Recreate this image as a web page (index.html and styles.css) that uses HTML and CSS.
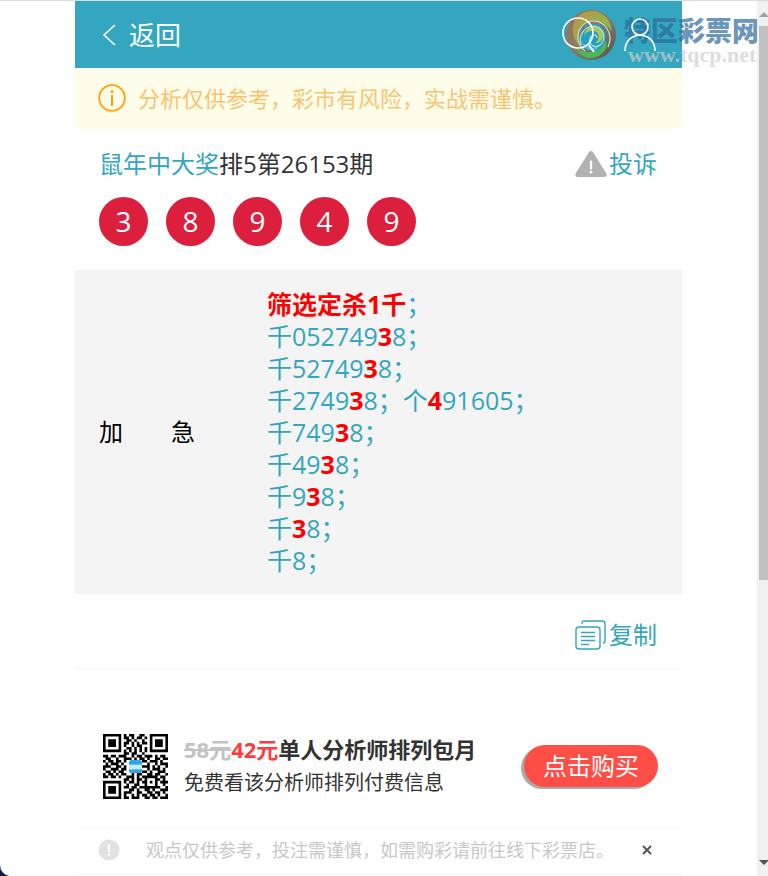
FILE: index.html
```html
<!DOCTYPE html>
<html lang="zh-CN">
<head>
    <meta charset="UTF-8">
    <meta name="viewport" content="width=device-width, initial-scale=1.0">
    <title>排5第26153期</title>
    <link rel="stylesheet" href="styles.css">
</head>
<body>
    <main class="page">
        <header class="header">
            <a class="back" href="#">
                <svg width="14" height="22" viewBox="0 0 14 22"><path d="M13 1L2 11L13 21" fill="none" stroke="#fff" stroke-width="1.6"/></svg>
                返回
            </a>
            <div class="tools">
                <a href="#" aria-label="搜索"><svg width="34" height="38" viewBox="0 0 34 38"><circle cx="16" cy="17" r="15" fill="none" stroke="#fff" stroke-width="1.6"/><path d="M26 28L32 36" stroke="#fff" stroke-width="2"/></svg></a>
                <a href="#" aria-label="我的"><svg width="32" height="34" viewBox="0 0 32 34"><g fill="none" stroke="#fff" stroke-width="1.6"><circle cx="16" cy="9" r="8"/><path d="M1 33C1 12 31 12 31 33"/></g></svg></a>
            </div>
        </header>

        <div class="notice">
            <svg width="28" height="28" viewBox="0 0 28 28"><circle cx="14" cy="14" r="12.8" fill="none" stroke="#ffa200" stroke-width="1.8"/><circle cx="14" cy="7.5" r="1.5" fill="#ffa200"/><path d="M14 11V22" stroke="#ffa200" stroke-width="2"/></svg>
            <span>分析仅供参考，彩市有风险，实战需谨慎。</span>
        </div>

        <section class="issue">
            <div class="issue-top">
                <h1 class="title"><a href="#">鼠年中大奖</a>排5第26153期</h1>
                <a class="action" href="#">
                    <svg width="32" height="26" viewBox="0 0 32 26"><path d="M13.7 1.4Q16-1.2 18.3 1.4L31.4 22.6Q32.4 25.6 29.6 26H2.4Q-.4 25.6.6 22.6Z" fill="#b2b2b2"/><path d="M16 10.5V17.5" stroke="#fff" stroke-width="2.2" stroke-linecap="round"/><circle cx="16" cy="21.2" r="1.4" fill="#fff"/></svg>
                    投诉
                </a>
            </div>
            <div class="balls">
                <span class="ball">3</span>
                <span class="ball">8</span>
                <span class="ball">9</span>
                <span class="ball">4</span>
                <span class="ball">9</span>
            </div>
        </section>

        <table class="plan">
            <tbody>
                <tr>
                    <th scope="row">加　　急</th>
                    <td>
                        <b>筛选定杀1千</b>；<br>
                        千052749<b>3</b>8；<br>
                        千52749<b>3</b>8；<br>
                        千2749<b>3</b>8；个<b>4</b>91605；<br>
                        千749<b>3</b>8；<br>
                        千49<b>3</b>8；<br>
                        千9<b>3</b>8；<br>
                        千<b>3</b>8；<br>
                        千8；
                    </td>
                </tr>
            </tbody>
        </table>

        <div class="copy">
            <a class="action" href="#">
                <svg width="32" height="30" viewBox="0 0 32 30"><g fill="none" stroke="#34a6bf" stroke-width="1.4"><rect x="1" y="7" width="24" height="22" rx="3"/><path d="M7 4V3Q7 1 9 1H27Q30 1 30 4V21Q30 23 28 23"/><path d="M6 12.5H20M6 16.5H20M6 20.5H20M6 24.500H14" stroke-width="1.6"/></g></svg>
                复制
            </a>
        </div>

        <section class="promo">
            <svg id="qr" class="qr" viewBox="0 0 25 25" role="img" aria-label="二维码"></svg>
            <div class="promo-text">
                <h2><del>58元</del><em>42元</em>单人分析师排列包月</h2>
                <p>免费看该分析师排列付费信息</p>
            </div>
            <button class="buy" type="button">点击购买</button>
        </section>

        <footer class="tips">
            <svg width="22" height="22" viewBox="0 0 22 22"><circle cx="11" cy="11" r="10.5" fill="#e2e2e2"/><path d="M11 5V13" stroke="#fff" stroke-width="2"/><circle cx="11" cy="16" r="1.2" fill="#fff"/></svg>
            <span>观点仅供参考，投注需谨慎，如需购彩请前往线下彩票店。</span>
            <button class="close" type="button" aria-label="关闭"><svg width="10" height="10" viewBox="0 0 10 10"><path d="M1 1L9 9M9 1L1 9" stroke="#555" stroke-width="2"/></svg></button>
        </footer>
    </main>

    <div class="watermark">
        <svg width="52" height="52" viewBox="0 0 52 52">
            <defs>
                <linearGradient id="ring" x1="0" y1="0" x2="1" y2="1"><stop offset="0" stop-color="#b0674c"/><stop offset=".5" stop-color="#94765f"/><stop offset="1" stop-color="#4f4a48"/></linearGradient>
                <linearGradient id="leaf" x1="0" y1="0" x2="1" y2="1"><stop offset="0" stop-color="#c98f42"/><stop offset=".6" stop-color="#9bb83c"/><stop offset="1" stop-color="#65b94d"/></linearGradient>
            </defs>
            <circle cx="26" cy="26" r="25" fill="url(#ring)"/>
            <path d="M16 5C29-3 46 5 47 23C42 14 33 9 25 12C13 16 10 28 16 38C6 30 4 13 16 5Z" fill="url(#leaf)"/>
            <path d="M10 38C21 47 36 44 41 31C44 39 38 47 28 49C20 50 13 45 10 38Z" fill="#54b748"/>
            <path d="M15 30C15 17 26 11 36 17C44 24 42 38 31 42C22 43 15 38 15 30Z" fill="#1f9fc4"/>
            <path d="M19 27C20 18 29 14 36 20C41 27 37 35 30 34C36 30 34 22 28 22C23 22 20 24 19 27Z" fill="#b5cc45"/>
            <path d="M16 30C19 38 28 41 35 36C31 45 18 43 16 30Z" fill="#46c3e3"/>
            <g fill="none" stroke="#d5e8df" stroke-width="1.2"><path d="M20 42C8 33 12 14 27 12C40 11 49 25 43 38"/><path d="M16 36C13 26 20 17 29 17C39 18 42 31 35 36C29 40 23 35 25 29C27 25 32 25 32 29"/></g>
        </svg>
        <div class="watermark-text">
            <strong>特区彩票网</strong>
            <span>www.tqcp.net</span>
        </div>
    </div>

    <div class="scrollbar">
        <svg class="arrow" width="9" height="5" viewBox="0 0 9 5"><path d="M0 5L5 0L9 4V5Z" fill="#a3a3a3"/></svg>
        <div class="thumb"></div>
        <svg class="arrow" width="9" height="5" viewBox="0 0 9 5"><path d="M0 0H9V1L5 5Z" fill="#505050"/></svg>
    </div>
    <svg class="corner" width="9" height="11" viewBox="0 0 9 11"><path d="M0 0Q1 9 9 11H0Z" fill="#26559b"/><path d="M0 5Q3 10 9 11H0Z" fill="#101936"/></svg>

    <script>
        const rows = [
            "1111111010110011001111111",
            "1000001011010110101000001",
            "1011101001101001001011101",
            "1011101011010101101011101",
            "1011101010010110001011101",
            "1000001001101010101000001",
            "1111111010101010101111111",
            "0000000011011001000000000",
            "1101101110010110111010110",
            "0110010011101011010011011",
            "1011011010000001101110100",
            "0101110100000000010010111",
            "1110011010000001110101001",
            "1001110110000000010111010",
            "0110101100000001101001110",
            "1011010110010110011011001",
            "1101101001110101111110110",
            "0000000011010110100011010",
            "1111111010110101101010111",
            "1000001001001100100010010",
            "1011101011011011111111001",
            "1011101000110100110100111",
            "1011101011100110011011010",
            "1000001010010101101101001",
            "1111111011011100110110111"
        ];
        let path = "";
        rows.forEach((row, y) => {
            for (const run of row.matchAll(/1+/g)) {
                path += `M${run.index} ${y}h${run[0].length}v1h-${run[0].length}z`;
            }
        });
        document.getElementById("qr").innerHTML = `
            <path d="${path}" fill="#000"/>
            <rect x="10" y="10" width="5" height="5" rx="1" fill="#29a7ea"/>
            <path d="M10 11.8h5v1.8h-5z" fill="#c9ecff"/>`;
    </script>
</body>
</html>
```
FILE: styles.css
```css
* {
    box-sizing: border-box;
}
body {
    margin: 0;
    padding-right: 11px;
    background-color: #fff;
    border-top: 1px solid #dcdcdc;
    font-family: "Open Sans", "Noto Sans CJK SC", sans-serif;
    font-size: 24px;
    line-height: 32px;
    color: #333;
}
a {
    color: #34a6bf;
    text-decoration: none;
}
svg {
    display: block;
    flex-shrink: 0;
}
button {
    border: none;
    font-family: inherit;
    cursor: pointer;
}
.page {
    max-width: 607px;
    margin: 0 auto;
}

.header {
    display: flex;
    justify-content: space-between;
    align-items: center;
    height: 67px;
    padding: 0 26px 0 27px;
    background-color: #34a6bf;
}
.back {
    display: flex;
    align-items: center;
    gap: 13px;
    font-size: 26px;
    color: #fff;
}
.tools {
    position: relative;
    z-index: 2;
    display: flex;
    align-items: center;
    gap: 28px;
}

.notice {
    display: flex;
    align-items: center;
    gap: 12px;
    height: 61px;
    padding: 0 23px 2px;
    background-color: #fffdea;
    font-size: 22px;
    color: #f8c471;
}

.issue {
    padding: 19px 25px 24px 24px;
}
.issue-top {
    display: flex;
    justify-content: space-between;
    align-items: center;
}
.title {
    margin: 0;
    font-size: 24px;
    font-weight: normal;
}
.action {
    display: flex;
    align-items: center;
    gap: 2px;
}
.balls {
    display: flex;
    gap: 18px;
    margin-top: 17px;
}
.ball {
    width: 49px;
    height: 49px;
    border-radius: 50%;
    background-color: #dc1f3d;
    color: #fff;
    font-size: 28px;
    line-height: 49px;
    text-align: center;
}

.plan {
    width: 100%;
    border-collapse: collapse;
    background-color: #f4f4f4;
}
.plan th {
    width: 192px;
    padding: 18px 0 18px 24px;
    color: #000;
    font-weight: normal;
    text-align: left;
}
.plan td {
    padding: 18px 0;
    font-size: 25px;
    color: #34a6bf;
}
.plan b {
    color: #f00;
}

.copy {
    display: flex;
    justify-content: flex-end;
    padding: 25px 25px 17px;
    border-bottom: 1px solid #f8f8f8;
}

.promo {
    display: flex;
    align-items: center;
    height: 159px;
    padding: 36px 24px 0 28px;
    border-bottom: 1px solid #fafafa;
}
.qr {
    width: 65px;
    height: 65px;
}
.promo-text {
    flex: 1;
    padding-left: 16px;
}
.promo-text h2 {
    margin: 0 0 2px;
    font-size: 22px;
}
.promo-text del {
    color: #c3c3c3;
}
.promo-text em {
    color: #ff3b3b;
    font-style: normal;
}
.promo-text p {
    margin: 0;
    font-size: 20px;
}
.buy {
    width: 134px;
    height: 42px;
    padding: 0;
    border-radius: 21px;
    background-color: #ff4e46;
    box-shadow: -3px 2px 0 #aaa;
    color: #fff;
    font-size: 24px;
    line-height: 42px;
}

.tips {
    display: flex;
    align-items: center;
    height: 46px;
    padding: 0 30px 1px 23px;
    border-bottom: 1px solid #f5f5fb;
    font-size: 18px;
    color: #c8c8c8;
}
.tips span {
    flex: 1;
    padding-left: 26px;
}
.close {
    padding: 0;
    background: none;
}

/* site logo floating over the header */
.watermark {
    position: absolute;
    top: 9px;
    right: 9px;
    display: flex;
    gap: 7px;
    pointer-events: none;
}
.watermark svg {
    opacity: .9;
}
.watermark-text {
    display: flex;
    flex-direction: column;
    padding-top: 6px;
}
.watermark strong {
    font-size: 27px;
    font-weight: 900;
    line-height: 32px;
    color: rgba(42, 105, 155, .7);
}
.watermark span {
    padding-left: 4px;
    font-family: "Liberation Serif", serif;
    font-size: 22px;
    font-weight: bold;
    line-height: 16px;
    color: rgba(205, 205, 205, .7);
}

.scrollbar {
    position: fixed;
    top: 1px;
    right: 0;
    bottom: 0;
    display: flex;
    flex-direction: column;
    align-items: flex-end;
    width: 11px;
    padding: 11px 0;
    background-color: #f0f0f0;
}
.thumb {
    width: 9px;
    height: 65%;
    margin: 9px 0 auto;
    background-color: #c1c1c1;
}
.corner {
    position: fixed;
    left: 0;
    bottom: 0;
}
```
